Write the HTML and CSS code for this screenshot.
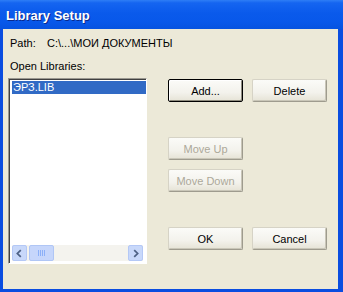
FILE: index.html
```html
<!DOCTYPE html>
<html>
<head>
<meta charset="utf-8">
<link rel="stylesheet" href="styles.css">
</head>
<body>
<div class="window">
  <div class="titlebar"><span class="title">Library Setup</span></div>
  <div class="client">
    <div class="path"><span class="path-label">Path:</span><span class="path-value">C:\...\МОИ ДОКУМЕНТЫ</span></div>
    <div class="label">Open Libraries:</div>
    <div class="main">
      <div class="listbox">
        <div class="items">
          <div class="item selected">ЭРЗ.LIB</div>
        </div>
        <div class="hscroll">
          <div class="sbtn"><svg width="15" height="15" viewBox="0 0 15 15"><path d="M9 3.5 L5 7.5 L9 11.5" fill="none" stroke="#4D6185" stroke-width="2"/></svg></div>
          <div class="thumb"><svg width="10" height="8" viewBox="0 0 10 8"><path d="M1.5 1v6M3.5 1v6M5.5 1v6M7.5 1v6" stroke="#8CB0F8" stroke-width="1"/></svg></div>
          <div class="track"></div>
          <div class="sbtn"><svg width="15" height="15" viewBox="0 0 15 15"><path d="M6 3.5 L10 7.5 L6 11.5" fill="none" stroke="#4D6185" stroke-width="2"/></svg></div>
        </div>
      </div>
      <div class="buttons">
        <div class="row">
          <div class="btn default">Add...</div>
          <div class="btn">Delete</div>
        </div>
        <div class="btn disabled moveup">Move Up</div>
        <div class="btn disabled movedown">Move Down</div>
        <div class="row okrow">
          <div class="btn">OK</div>
          <div class="btn">Cancel</div>
        </div>
      </div>
    </div>
  </div>
</div>
</body>
</html>
```
FILE: styles.css
```css
html, body {
  margin: 0;
  padding: 0;
}
body {
  width: 343px;
  height: 292px;
  overflow: hidden;
  font-family: "Liberation Sans", Arial, sans-serif;
  font-size: 11px;
  color: #000;
}
.window {
  width: 343px;
  height: 292px;
  box-sizing: border-box;
  background: #0A4DE0;
  display: flex;
  flex-direction: column;
}
.titlebar {
  height: 29px;
  flex: none;
  background: linear-gradient(#2E7EF6 0, #1565F0 10%, #0A5AEB 45%, #0858EA 75%, #0653E0 100%);
  display: flex;
  align-items: center;
  padding-left: 6px;
  padding-top: 1px;
  box-sizing: border-box;
}
.title {
  color: #fff;
  font-family: "Liberation Sans", Arial, sans-serif;
  font-weight: bold;
  font-size: 13px;
  text-shadow: 1px 1px 0 #0A2A8C;
}
.client {
  flex: 1;
  background: #ECE9D8;
  margin: 0 5px 3px 3px;
  padding: 7px 0 0 5px;
}
.path {
  height: 14px;
  line-height: 14px;
  padding-left: 2px;
  display: flex;
}
.path-label {
  width: 37px;
}
.label {
  margin-top: 9px;
  height: 14px;
  line-height: 14px;
  padding-left: 2px;
}
.main {
  margin-top: 5px;
  display: flex;
}
.listbox {
  width: 139px;
  height: 186px;
  box-sizing: border-box;
  border-top: 1px solid #9a9890;
  border-left: 1px solid #9a9890;
  border-right: 1px solid #fff;
  border-bottom: 1px solid #fff;
  box-shadow: inset 1px 1px 0 #404040;
  background: #fff;
  display: flex;
  flex-direction: column;
  padding: 2px 2px 2px 3px;
}
.items {
  flex: 1;
}
.item {
  height: 13px;
  line-height: 13px;
  padding-left: 1px;
  width: 133px;
}
.selected {
  background: #316AC5;
  color: #fff;
}
.hscroll {
  height: 16px;
  display: flex;
  background: #F4F3EE;
  margin-right: 1px;
}
.sbtn {
  width: 15px;
  height: 16px;
  box-sizing: border-box;
  background: #C8D8FA;
  border: 1px solid #B4C8F6;
  border-radius: 2px;
  display: flex;
  align-items: center;
  justify-content: center;
}
.thumb {
  width: 25px;
  margin-left: 2px;
  height: 16px;
  box-sizing: border-box;
  background: #C6D6FB;
  border: 1px solid #B0C6F5;
  border-radius: 2px;
  display: flex;
  align-items: center;
  justify-content: center;
}
.track {
  flex: 1;
}
.buttons {
  margin-left: 21px;
  margin-top: 1px;
  display: flex;
  flex-direction: column;
}
.row {
  display: flex;
  gap: 9px;
}
.btn {
  width: 75px;
  height: 23px;
  box-sizing: border-box;
  display: flex;
  align-items: center;
  justify-content: center;
  background: linear-gradient(#FBFBF8 0, #F3F2EC 60%, #E6E3D6 100%);
  border: 1px solid #9E9B8E;
  border-top-color: #D6D3C6;
  border-left-color: #D6D3C6;
  border-radius: 2px;
  box-shadow: inset -1px -1px 0 #C9C6B8;
}
.btn.default {
  border: 1px solid #000;
  box-shadow: inset 1px 1px 0 #fff, inset -1px -1px 0 #8E8B7E;
}
.btn.disabled {
  color: #ACA899;
}
.moveup {
  margin-top: 35px;
}
.movedown {
  margin-top: 9px;
}
.okrow {
  margin-top: 35px;
}
```
